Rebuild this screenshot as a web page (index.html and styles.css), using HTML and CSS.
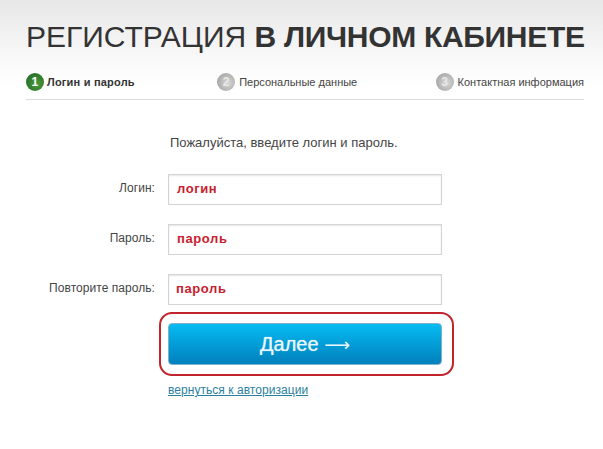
FILE: index.html
```html
<!DOCTYPE html>
<html lang="ru">
<head>
<meta charset="utf-8">
<title>Регистрация</title>
<link rel="stylesheet" href="styles.css">
</head>
<body>
<header class="head">
  <h1 class="title">РЕГИСТРАЦИЯ <b>В ЛИЧНОМ КАБИНЕТЕ</b></h1>
  <ol class="steps">
    <li class="step active"><span class="num">1</span>Логин и пароль</li>
    <li class="step middle"><span class="num">2</span>Персональные данные</li>
    <li class="step"><span class="num">3</span>Контактная информация</li>
  </ol>
</header>
<main class="form">
  <p class="intro">Пожалуйста, введите логин и пароль.</p>
  <div class="row"><label class="lab">Логин:</label><div class="field">логин</div></div>
  <div class="row"><label class="lab">Пароль:</label><div class="field">пароль</div></div>
  <div class="row"><label class="lab">Повторите пароль:</label><div class="field field-last">пароль</div></div>
  <div class="mark"><button class="next"><span class="next-word">Далее</span> <span class="arrow">⟶</span></button></div>
  <a class="back" href="#">вернуться к авторизации</a>
</main>
</body>
</html>
```
FILE: styles.css
```css
* { box-sizing: border-box; }
html, body { margin: 0; height: 100%; overflow: hidden; }
body { background: #fff; font-family: "Liberation Sans", Arial, sans-serif; color: #444; }
.head {
  height: 100px;
  margin: 0;
  padding: 18px 19px 0 26px;
  background: linear-gradient(#e7e7e7 0, #fafafa 62px, #fff 90px);
}
.title {
  margin: 0;
  font-size: 30px;
  line-height: 38px;
  font-weight: normal;
  color: #333;
  white-space: nowrap;
}
.title b { font-weight: bold; letter-spacing: -.3px; }
.steps {
  list-style: none;
  margin: 0;
  padding: 16px 0 0;
  height: 44px;
  display: flex;
  justify-content: space-between;
  border-bottom: 1px solid #dcdcdc;
}
.step { display: flex; align-items: center; gap: 4px; font-size: 11px; color: #444; height: 19px; }
.step.active { font-weight: bold; color: #333; gap: 3px; letter-spacing: .2px; }
.step.middle { margin-left: 4px; }
.num {
  width: 18px; height: 18px; border-radius: 50%;
  display: flex; align-items: center; justify-content: center;
  font-size: 12px; font-weight: bold; color: #e8e8e8;
  background: radial-gradient(circle at 60% 55%, #d8d8d8 0, #a4a4a4 80%);
}
.active .num { color: #fff; background: radial-gradient(circle at 60% 60%, #4f9a3e 0, #1f6b24 85%); }
.form { padding-left: 168px; }
.intro { margin: 35px 0 0 2px; font-size: 13px; line-height: 16px; color: #444; }
.row { display: flex; align-items: center; margin-top: 19px; height: 31px; margin-left: -168px; }
.intro + .row { margin-top: 23px; }
.lab { width: 155px; margin-right: 13px; text-align: right; font-size: 12px; letter-spacing: .05px; color: #444; position: relative; top: -2px; }
.field {
  width: 274px; height: 31px;
  border: 1px solid #d4d4d4;
  box-shadow: inset 0 1px 2px rgba(0,0,0,.1);
  padding-left: 8px;
  font-size: 13px; font-weight: bold; line-height: 27px;
  letter-spacing: .6px;
  color: #c8202c;
}
.field-last { padding-left: 7px; }
.mark {
  width: 295px; height: 64px;
  margin: 7px 0 0 -9px;
  padding: 9px 10px 9px 7px;
  border: 2px solid #c1242c;
  border-radius: 13px;
}
.next {
  display: block; width: 274px; height: 42px; padding: 0;
  border: 1px solid #7fb1c8;
  border-radius: 4px;
  background: linear-gradient(#06bbf2, #0180bd);
  color: #eaf8fd;
  font: normal 20px/1 "Liberation Sans", Arial, sans-serif;
}
.next-word { text-shadow: 0 0 1px rgba(234,248,253,.8); }
.arrow { font-family: "DejaVu Sans", sans-serif; font-size: 18px; }
.back { display: inline-block; margin-top: 7px; font-size: 12px; letter-spacing: .05px; color: #2b7f9e; text-decoration: underline; }
```
